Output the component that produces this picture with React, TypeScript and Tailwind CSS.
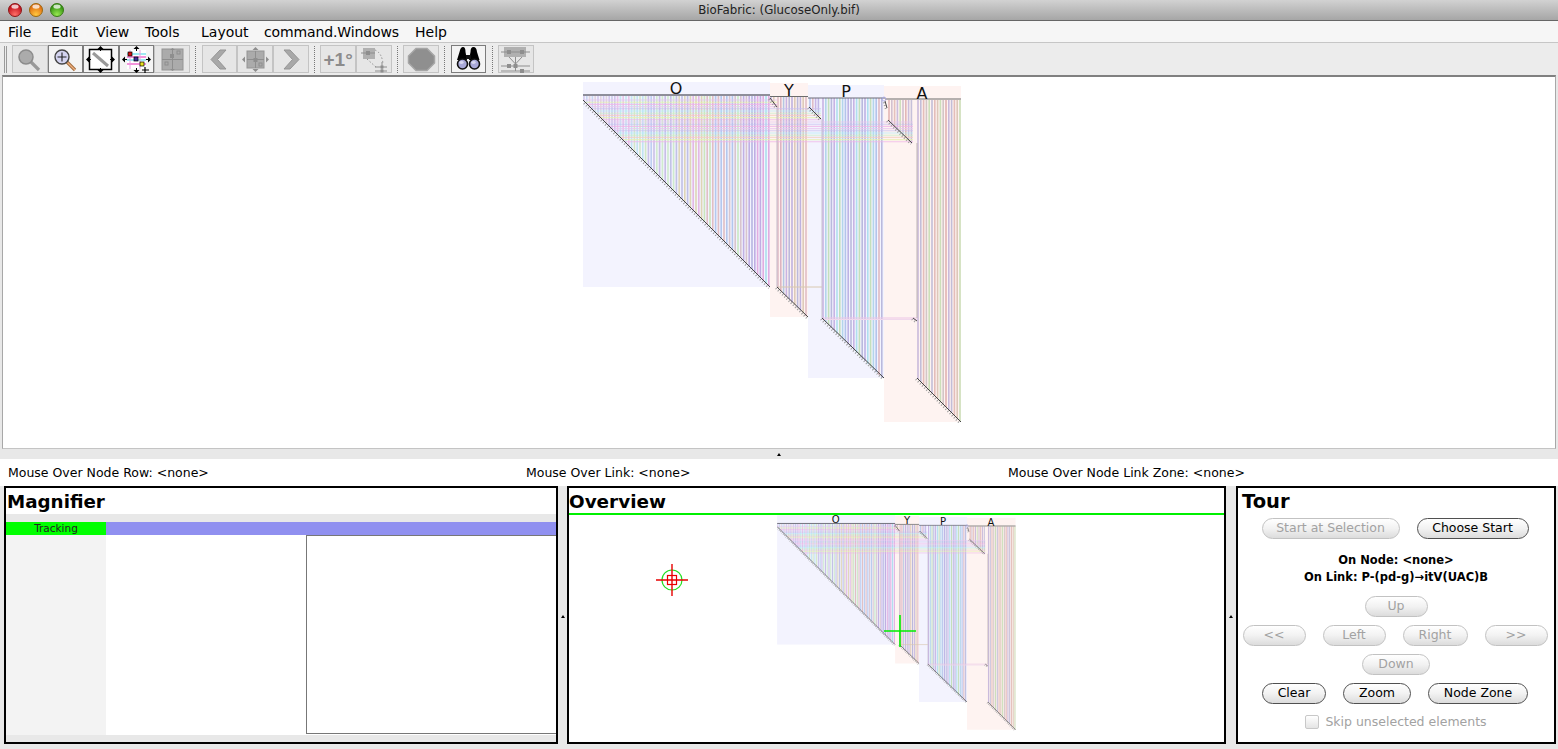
import React from "react";

const FONT = { fontFamily: '"DejaVu Sans", "Noto Sans", sans-serif' };
const PAL_O = ["#b4a6dc", "#a4bdea", "#dcb0b4", "#bfe2a8", "#a4dcec", "#e0a4dc", "#d8cc9c", "#acacdc", "#b8a4e0", "#d4bcc4", "#c0e8b8"];
const PAL_Y = ["#b4a6dc", "#d8a8b8", "#b0b0d8", "#dcb4c0", "#c0a8e0", "#d8c4b0", "#a8c0e0"];
const PAL_P = ["#a8bce8", "#b4a8e0", "#a4dcec", "#bcdcb0", "#dcb0b8", "#b0b0d8", "#c0a8e0", "#a8d0e8"];
const PAL_A = ["#dca8a8", "#c0b0d8", "#d8c0b0", "#c4dcb0", "#c8b4c8", "#b8b4d4", "#e0b4b0", "#cbbfc0"];
const HPAL = ["#f0b4e8", "#b8ecf8", "#e8f0b0", "#c8c0f0", "#f4d0c0", "#e8c8f0", "#c8f0c8"];
const hash = (n: number) => ((n * 2654435761) >>> 0) % 97;
const pick = (p: string[], n: number) => p[hash(n) % p.length];

function range(a: number, b: number, s: number) {
  const r: number[] = [];
  for (let v = a; v <= b; v += s) r.push(v);
  return r;
}

function Diag({ x1, y1, x2, y2 }: { x1: number; y1: number; x2: number; y2: number }) {
  return (
    <g>
      <line x1={x1 - 1.2} y1={y1 + 1.2} x2={x2 - 1.2} y2={y2 + 1.2} stroke="#a0a0a0" strokeWidth="2" strokeDasharray="1 2" />
      <line x1={x1} y1={y1} x2={x2} y2={y2} stroke="#444" strokeWidth="1" />
    </g>
  );
}

type V = { x: number; a: number; b: number; c: string; o: number };

function Fabric({ width, height, cls }: { width: number; height: number; cls?: string }) {
  const blocks = [
    [583, 82, 187, 205, "#f3f3fe"],
    [770, 83, 38, 234, "#fef3f1"],
    [808, 85, 76, 293, "#f3f3fe"],
    [884, 86, 77, 336, "#fef3f1"],
  ] as const;
  const vert: V[] = [
    ...range(584, 770, 2.8).map((x, i) => ({ x, a: 96, b: x - 583 + 100, c: pick(PAL_O, i), o: 0.5 + (0.4 * (x - 583)) / 187 })),
    ...range(771, 776, 2.8).map((x, i) => ({ x, a: 97, b: 98 + (x - 770) * 1.3, c: pick(PAL_Y, i), o: 0.8 })),
    ...range(778, 807, 2.8).map((x, i) => ({ x, a: 97, b: x - 777 + 287, c: pick(PAL_Y, i + 5), o: 0.85 })),
    ...range(810, 820, 2.8).map((x, i) => ({ x, a: 98, b: x - 809 + 107, c: pick(PAL_P, i), o: 0.8 })),
    ...range(823, 884, 2.8).map((x, i) => ({ x, a: 98, b: x - 822 + 318, c: pick(PAL_P, i + 9), o: 0.85 })),
    ...range(889, 912, 2.8).map((x, i) => ({ x, a: 100, b: x - 888 + 120, c: pick(PAL_A, i), o: 0.8 })),
    ...range(918, 960, 2.8).map((x, i) => ({ x, a: 100, b: x - 917 + 378, c: pick(PAL_A, i + 7), o: 0.85 })),
  ];
  const hor = range(100, 143, 2.2).map((y) => [583 + (y - 100), y, y < 107 ? 777 : y < 120 ? 821 : 913]);
  return (
    <svg width={width} height={height} viewBox="583 80 380 344" className={cls}>
      {blocks.map((b, i) => (
        <rect key={i} x={b[0]} y={b[1]} width={b[2]} height={b[3]} fill={b[4]} />
      ))}
      {vert.map((v, i) => (
        <line key={i} x1={v.x} y1={v.a} x2={v.x} y2={v.b} stroke={v.c} strokeWidth="1.6" opacity={v.o} />
      ))}
      {hor.map((h, i) => (
        <line key={i} x1={h[0]} y1={h[1]} x2={h[2]} y2={h[1]} stroke={pick(HPAL, i + 11)} strokeWidth="1.1" opacity="0.75" />
      ))}
      <line x1="777" y1="287" x2="822" y2="287" stroke="#d8c8b0" />
      <line x1="822" y1="318" x2="917" y2="318" stroke="#ecc4e6" />
      <line x1="822" y1="319.5" x2="917" y2="319.5" stroke="#f0d8ec" />
      <line x1="822" y1="119" x2="822" y2="318" stroke="#c8c0d0" />
      <line x1="917" y1="143" x2="917" y2="318" stroke="#bfb4b4" />
      <line x1="777" y1="107" x2="777" y2="287" stroke="#c4b8c8" />
      <line x1="583" y1="95" x2="770" y2="95" stroke="#6c6c78" strokeWidth="1.5" />
      <line x1="770" y1="96.5" x2="808" y2="96.5" stroke="#6c6c6c" strokeWidth="1.2" />
      <line x1="808" y1="98" x2="885" y2="98" stroke="#6c6c78" strokeWidth="1.2" />
      <line x1="885" y1="99" x2="961" y2="99" stroke="#6c6c6c" strokeWidth="1.2" />
      <Diag x1={583} y1={100} x2={770} y2={287} />
      <Diag x1={770} y1={98} x2={777} y2={107} />
      <Diag x1={777} y1={287} x2={808} y2={317} />
      <Diag x1={809} y1={107} x2={821} y2={119} />
      <Diag x1={822} y1={318} x2={884} y2={378} />
      <Diag x1={885} y1={101} x2={887} y2={108} />
      <Diag x1={888} y1={120} x2={912} y2={143} />
      <Diag x1={913} y1={318} x2={917} y2={321} />
      <Diag x1={917} y1={378} x2={961} y2={422} />
      <circle cx="884" cy="99" r="2" fill="none" stroke="#a8a8e8" strokeWidth="0.8" />
      <g fontSize="16" fill="#111" textAnchor="middle" style={FONT}>
        <text x="676" y="94">O</text>
        <text x="789" y="96">Y</text>
        <text x="846" y="97">P</text>
        <text x="922" y="99">A</text>
      </g>
    </svg>
  );
}

function Light({ c1, c2, c3, id }: { c1: string; c2: string; c3: string; id: string }) {
  return (
    <svg width="14" height="14" viewBox="0 0 14 14">
      <defs>
        <radialGradient id={id} cx="50%" cy="85%" r="70%">
          <stop offset="0" stopColor={c1} />
          <stop offset="1" stopColor={c2} />
        </radialGradient>
      </defs>
      <circle cx="7" cy="7" r="6.5" fill={`url(#${id})`} stroke={c3} />
      <ellipse cx="7" cy="3.6" rx="3.6" ry="2.2" fill="#fff" opacity="0.75" />
    </svg>
  );
}

const G = "#8e8e8e";

function Arrows({ c = "#000" }: { c?: string }) {
  return (
    <g fill={c}>
      <path d="M16.5 0l-3 3h6zM16.5 27l-3-3h6zM2 13.5l3-3v6zM31 13.5l-3-3v6z" />
      <path d="M16.5 2v3M16.5 22v3M4 13.5h3M26 13.5h3" stroke={c} />
    </g>
  );
}

const icons: Record<string, React.ReactNode> = {
  zoomOut: (
    <g>
      <line x1="18" y1="16" x2="26" y2="24" stroke="#999" strokeWidth="3.2" />
      <circle cx="13" cy="11" r="7" fill="#ababab" stroke="#8c8c8c" strokeWidth="1.5" />
    </g>
  ),
  zoomIn: (
    <g>
      <line x1="18" y1="16" x2="26" y2="24" stroke="#a06a3a" strokeWidth="3.2" />
      <line x1="18" y1="16" x2="26" y2="24" stroke="#f0b080" strokeWidth="1.3" />
      <circle cx="13" cy="11" r="7" fill="#d4d4f0" stroke="#444" strokeWidth="1.4" />
      <path d="M13 6.5v9M8.5 11h9" stroke="#222" strokeWidth="1.1" />
    </g>
  ),
  fit: (
    <g>
      <rect x="5.5" y="3.5" width="22" height="20" fill="#fff" stroke="#000" strokeWidth="1.5" />
      <line x1="9" y1="7" x2="24" y2="20" stroke="#9a9a9a" strokeWidth="3" />
      <Arrows />
    </g>
  ),
  sel: (
    <g>
      <rect x="7" y="4" width="19" height="19" fill="#fff" />
      <path d="M7 8h19M7 14h19" stroke="#3fd6e8" strokeWidth="1.2" />
      <path d="M7 11h19M7 18h19" stroke="#f070d0" strokeWidth="1.4" />
      <path d="M10 4v19M20 4v19" stroke="#e8a0e0" />
      <rect x="8" y="6" width="4" height="4" fill="#d01010" stroke="#000" strokeWidth=".7" />
      <rect x="14" y="11" width="4" height="4" fill="#40309a" stroke="#000" strokeWidth=".7" />
      <rect x="20" y="16" width="4" height="4" fill="#e8e020" stroke="#000" strokeWidth=".7" />
      <Arrows />
      <path d="M25 21v6M22 24h7" stroke="#000" strokeWidth="1.2" />
    </g>
  ),
  graySq: (
    <g>
      <rect x="6" y="3" width="21" height="21" fill="#ababab" stroke="#949494" />
      <path d="M16.5 3v21M6 13.5h21" stroke="#8e8e8e" />
      <rect x="14" y="8" width="4" height="4" fill="#8e8e8e" />
      <rect x="21" y="5" width="3" height="3" fill="none" stroke={G} />
      <rect x="9" y="16" width="3" height="3" fill="none" stroke={G} />
      <path d="M16.5 25l-2.5-2h5zM16.5 2l-2.5 2h5z" fill={G} />
    </g>
  ),
  left: <path d="M17 4L8 13.5 17 23h6L14.5 13.5 23 4z" fill="#a8a8a8" stroke="#959595" />,
  center: (
    <g>
      <rect x="8" y="5" width="17" height="17" fill="#ababab" stroke="#949494" />
      <path d="M16.5 5v17M8 13.5h17" stroke={G} />
      <rect x="14.5" y="12" width="4" height="4" fill={G} />
      <rect x="20" y="17" width="3" height="3" fill="none" stroke={G} />
      <path d="M16.5 1l-3 3h6zM16.5 26l-3-3h6zM3 13.5l3-3v6zM30 13.5l-3-3v6z" fill={G} />
    </g>
  ),
  right: <path d="M16 4L25 13.5 16 23h-6L18.5 13.5 10 4z" fill="#a8a8a8" stroke="#959595" />,
  tree: (
    <g>
      <rect x="6" y="2" width="12" height="11" fill="#b0b0b0" />
      <path d="M4 7h14" stroke={G} />
      <rect x="9" y="5" width="4" height="4" fill={G} />
      <path d="M18 4q7 3 8 14M10 13l10 9" stroke={G} strokeDasharray="1.5 2" fill="none" />
      <path d="M18 21h12M18 25h12M25 16v10" stroke={G} />
      <rect x="23.5" y="19.5" width="3" height="3" fill={G} />
      <rect x="23.5" y="23.5" width="3" height="3" fill={G} />
    </g>
  ),
  stop: <path d="M11 2.5h11l7.5 7.5v7l-7.5 7.5H11L3.5 17v-7z" fill="#8f8f8f" stroke="#a6a6a6" strokeWidth="1.5" />,
  bino: (
    <g>
      <path d="M7.5 6q1-5 3.5-5t2.5 5l1.5 8H5z" fill="#000" />
      <path d="M18.5 6q0-5 3-5t3.5 5l2.5 8H17z" fill="#000" />
      <rect x="14" y="9" width="5" height="4" fill="#111" />
      <circle cx="10.5" cy="18" r="5" fill="#a9a9d8" stroke="#111" strokeWidth="1.6" />
      <circle cx="22.5" cy="18" r="5" fill="#a9a9d8" stroke="#111" strokeWidth="1.6" />
      <ellipse cx="9.5" cy="16.5" rx="2.2" ry="1.4" fill="#d8d8f0" />
      <ellipse cx="21.5" cy="16.5" rx="2.2" ry="1.4" fill="#d8d8f0" />
    </g>
  ),
  layout: (
    <g>
      <rect x="5" y="1" width="22" height="10" fill="#b0b0b0" />
      <path d="M2 6h29M2 20h29M2 25h29M16.5 11v14M10 11l6.5 7 6.5-7" stroke={G} fill="none" />
      <rect x="8" y="4" width="4" height="4" fill={G} />
      <rect x="21" y="4" width="4" height="4" fill={G} />
      <rect x="14.5" y="18" width="4" height="4" fill={G} />
      <rect x="8" y="18" width="4" height="4" fill={G} />
      <rect x="21" y="23" width="4" height="4" fill={G} />
    </g>
  ),
};

function ToolBtn({ name, active, children }: { name?: string; active?: boolean; children?: React.ReactNode }) {
  return (
    <div
      className={`w-[35.6px] h-[28px] border flex items-center justify-center ${
        active ? "border-[#7c7c7c] bg-[#f4f4f4]" : "border-[#c4c4c4] bg-[#e6e6e6]"
      }`}
    >
      {name ? (
        <svg width="33" height="27" viewBox="0 0 33 27" className="shrink-0">
          {icons[name]}
        </svg>
      ) : (
        children
      )}
    </div>
  );
}

function Sep() {
  return <div className="w-0 h-[27px] mx-[5.4px] border-l border-dotted border-[#777]" />;
}

function Pill({ w, on, children }: { w: number; on?: boolean; children: React.ReactNode }) {
  return (
    <div
      style={{ width: w }}
      className={`h-[21px] rounded-full border flex items-center justify-center text-[12.5px] leading-none bg-gradient-to-b from-white via-[#f2f2f2] to-[#dcdcdc] ${
        on ? "border-[#505050] text-black" : "border-[#c2c2c2] text-[#a2a2a2]"
      }`}
    >
      {children}
    </div>
  );
}

function Grip() {
  return <span className="block w-0 h-0 border-x-[2px] border-x-transparent border-b-[3px] border-b-black" />;
}

export default function App() {
  return (
    <div style={FONT} className="w-[1558px] h-[749px] overflow-hidden flex flex-col bg-[#e8e8e8] text-black">
      {/* title bar */}
      <div className="relative h-[21px] shrink-0 pt-[1px] bg-gradient-to-b from-[#d2d2d2] to-[#a6a6a6] border-b border-[#666] flex items-center justify-center text-[11.8px] text-[#222]">
        <div className="absolute left-[8px] top-[3px] flex gap-[7px]">
          <Light id="l1" c1="#ff7068" c2="#c00c18" c3="#8a1a1a" />
          <Light id="l2" c1="#ffc840" c2="#e06a10" c3="#9a6a10" />
          <Light id="l3" c1="#98e850" c2="#309010" c3="#3a7a18" />
        </div>
        BioFabric: (GlucoseOnly.bif)
      </div>
      {/* menu */}
      <div className="h-[21px] shrink-0 bg-[#f6f6f6] flex items-center pl-[8px] pt-[2px] text-[14px]">
        <span className="w-[43px]">File</span>
        <span className="w-[45px]">Edit</span>
        <span className="w-[49px]">View</span>
        <span className="w-[56px]">Tools</span>
        <span className="w-[63px]">Layout</span>
        <span className="w-[151px] tracking-[-0.12px]">command.Windows</span>
        <span>Help</span>
      </div>
      {/* toolbar */}
      <div className="h-[33px] shrink-0 bg-[#ececec] border-t border-[#c6c6c6] flex items-center pl-[4px]">
        <div className="w-[3px] h-[27px] border-x border-[#9a9a9a] mr-[5px]" />
        <div className="flex items-center">
          <ToolBtn name="zoomOut" />
          <ToolBtn name="zoomIn" active />
          <ToolBtn name="fit" active />
          <ToolBtn name="sel" active />
          <ToolBtn name="graySq" />
          <Sep />
          <ToolBtn name="left" />
          <ToolBtn name="center" />
          <ToolBtn name="right" />
          <Sep />
          <ToolBtn>
            <span className="text-[#8c8c8c] font-bold text-[19px] leading-none whitespace-nowrap" style={{ fontFamily: '"Liberation Sans", sans-serif' }}>
              +1°
            </span>
          </ToolBtn>
          <ToolBtn name="tree" />
          <Sep />
          <ToolBtn name="stop" />
          <Sep />
          <ToolBtn name="bino" active />
          <Sep />
          <ToolBtn name="layout" />
        </div>
      </div>
      {/* main canvas */}
      <div className="h-[374px] shrink-0 mx-[2px] bg-white border border-t-[2px] border-t-[#808080] border-[#a8a8a8] border-b-[#c4c4c4] pl-[580px] pt-[3px] overflow-hidden">
        <Fabric width={380} height={344} />
      </div>
      {/* divider */}
      <div className="h-[10px] shrink-0 flex items-center justify-center">
        <Grip />
      </div>
      {/* status */}
      <div className="h-[27px] shrink-0 bg-white text-[12.5px] pt-[1px] flex items-center">
        <span className="ml-[8px] w-[518px]">Mouse Over Node Row: &lt;none&gt;</span>
        <span className="w-[482px]">Mouse Over Link: &lt;none&gt;</span>
        <span>Mouse Over Node Link Zone: &lt;none&gt;</span>
      </div>
      {/* panels */}
      <div className="h-[258px] shrink-0 flex pl-[4px] pr-[2px] bg-[#e8e8e8]">
        <div className="w-[554px] border-[2px] border-black bg-white flex flex-col">
          <div className="h-[26px] pl-[1px] font-bold text-[18.3px] leading-[28px]">Magnifier</div>
          <div className="h-[8px] bg-[#e8e8e8]" />
          <div className="h-[13px] flex">
            <div className="w-[100px] bg-[#00ff00] text-[10.5px] leading-[13px] text-center text-[#222]">Tracking</div>
            <div className="flex-1 bg-[#9090f0]" />
          </div>
          <div className="flex-1 flex min-h-0">
            <div className="w-[100px] bg-[#f3f3f3]" />
            <div className="flex-1 bg-white pl-[200px] pb-[1px]">
              <div className="h-full border border-r-0 border-[#777] bg-white" />
            </div>
          </div>
          <div className="h-[7px] bg-[#e8e8e8]" />
        </div>
        <div className="w-[9px] flex items-center justify-center pt-[2px]">
          <Grip />
        </div>
        <div className="relative w-[659px] border-[2px] border-black bg-white overflow-hidden">
          <div className="h-[25px] font-bold text-[18.4px] leading-[28px]">Overview</div>
          <div className="h-[2px] bg-[#00f000]" />
          <Fabric width={240} height={217} cls="ml-[208px] -mt-[1px]" />
          <svg width="34" height="34" viewBox="0 0 34 34" className="absolute left-[86px] top-[75px]">
            <circle cx="17" cy="17" r="10" fill="none" stroke="#22e022" strokeWidth="1.2" />
            <path d="M17 1v32M1 17h32" stroke="#e80000" strokeWidth="1.4" />
            <rect x="12.5" y="12.5" width="9" height="9" fill="none" stroke="#e80000" strokeWidth="1.2" />
          </svg>
          <svg width="32" height="32" viewBox="0 0 32 32" className="absolute left-[315px] top-[127px]">
            <path d="M16 0v32M0 16h32" stroke="#00ee00" strokeWidth="1.6" />
          </svg>
        </div>
        <div className="w-[10px] flex items-center justify-center pt-[2px]">
          <Grip />
        </div>
        <div className="w-[320px] border-[2px] border-black bg-white flex flex-col items-center">
          <div className="self-start h-[26px] pl-[4px] font-bold text-[19.5px] leading-[28px]">Tour</div>
          <div className="flex gap-[17px] mt-[4px] -ml-[2px]">
            <Pill w={138}>Start at Selection</Pill>
            <Pill w={112} on>
              Choose Start
            </Pill>
          </div>
          <div className="mt-[13px] text-[11.5px] font-bold leading-[17px] text-center">
            <div>On Node: &lt;none&gt;</div>
            <div>On Link: P-(pd-g)→itV(UAC)B</div>
          </div>
          <div className="mt-[10px]">
            <Pill w={63}>Up</Pill>
          </div>
          <div className="flex gap-[17px] mt-[8px] -ml-[2px]">
            <Pill w={63}>&lt;&lt;</Pill>
            <Pill w={63}>Left</Pill>
            <Pill w={65}>Right</Pill>
            <Pill w={63}>&gt;&gt;</Pill>
          </div>
          <div className="mt-[8px]">
            <Pill w={68}>Down</Pill>
          </div>
          <div className="flex gap-[17px] mt-[8px] -ml-[2px]">
            <Pill w={64} on>
              Clear
            </Pill>
            <Pill w={68} on>
              Zoom
            </Pill>
            <Pill w={100} on>
              Node Zone
            </Pill>
          </div>
          <div className="mt-[9px] flex items-center gap-[6px] text-[12.5px] text-[#a2a2a2]">
            <span className="w-[14px] h-[14px] rounded-[2px] border border-[#c8c8c8] bg-gradient-to-b from-white to-[#e4e4e4]" />
            Skip unselected elements
          </div>
        </div>
      </div>
    </div>
  );
}
